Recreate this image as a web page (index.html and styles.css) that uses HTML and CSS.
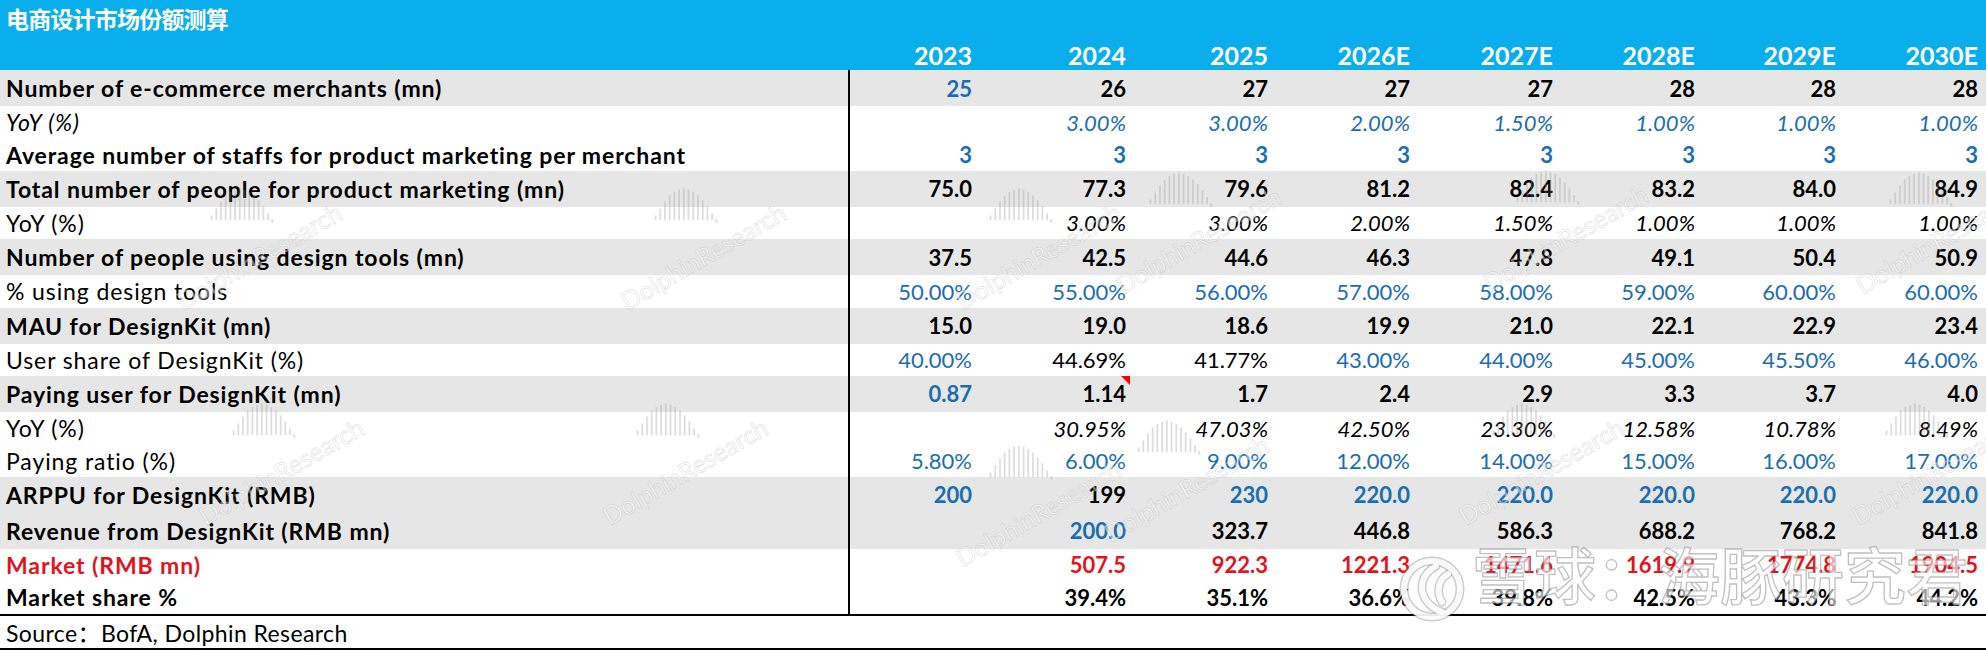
FILE: index.html
```html
<!DOCTYPE html>
<html lang="zh-CN">
<head>
<meta charset="utf-8">
<title>电商设计市场份额测算</title>
<link rel="stylesheet" href="styles.css">
</head>
<body>
<div class="sheet">
  <div class="header">
    <div class="title">电商设计市场份额测算</div>
    <div class="row years">
      <div class="hl"></div>
      <div class="c">2023</div><div class="c">2024</div><div class="c">2025</div><div class="c">2026E</div>
      <div class="c">2027E</div><div class="c">2028E</div><div class="c">2029E</div><div class="c">2030E</div>
    </div>
  </div>

  <div class="body">
    <div class="row g b">
      <div class="lbl">Number of e-commerce merchants (mn)</div>
      <div class="c blue">25</div><div class="c">26</div><div class="c">27</div><div class="c">27</div>
      <div class="c">27</div><div class="c">28</div><div class="c">28</div><div class="c">28</div>
    </div>
    <div class="row w i blue">
      <div class="lbl blk">YoY (%)</div>
      <div class="c"></div><div class="c">3.00%</div><div class="c">3.00%</div><div class="c">2.00%</div>
      <div class="c">1.50%</div><div class="c">1.00%</div><div class="c">1.00%</div><div class="c">1.00%</div>
    </div>
    <div class="row w b blue">
      <div class="lbl blk">Average number of staffs for product marketing per merchant</div>
      <div class="c">3</div><div class="c">3</div><div class="c">3</div><div class="c">3</div>
      <div class="c">3</div><div class="c">3</div><div class="c">3</div><div class="c">3</div>
    </div>
    <div class="row g b">
      <div class="lbl">Total number of people for product marketing (mn)</div>
      <div class="c">75.0</div><div class="c">77.3</div><div class="c">79.6</div><div class="c">81.2</div>
      <div class="c">82.4</div><div class="c">83.2</div><div class="c">84.0</div><div class="c">84.9</div>
    </div>
    <div class="row w">
      <div class="lbl">YoY (%)</div>
      <div class="c i"></div><div class="c i">3.00%</div><div class="c i">3.00%</div><div class="c i">2.00%</div>
      <div class="c i">1.50%</div><div class="c i">1.00%</div><div class="c i">1.00%</div><div class="c i">1.00%</div>
    </div>
    <div class="row g b">
      <div class="lbl">Number of people using design tools (mn)</div>
      <div class="c">37.5</div><div class="c">42.5</div><div class="c">44.6</div><div class="c">46.3</div>
      <div class="c">47.8</div><div class="c">49.1</div><div class="c">50.4</div><div class="c">50.9</div>
    </div>
    <div class="row w blue">
      <div class="lbl blk">% using design tools</div>
      <div class="c">50.00%</div><div class="c">55.00%</div><div class="c">56.00%</div><div class="c">57.00%</div>
      <div class="c">58.00%</div><div class="c">59.00%</div><div class="c">60.00%</div><div class="c">60.00%</div>
    </div>
    <div class="row g b">
      <div class="lbl">MAU for DesignKit (mn)</div>
      <div class="c">15.0</div><div class="c">19.0</div><div class="c">18.6</div><div class="c">19.9</div>
      <div class="c">21.0</div><div class="c">22.1</div><div class="c">22.9</div><div class="c">23.4</div>
    </div>
    <div class="row w blue">
      <div class="lbl blk">User share of DesignKit (%)</div>
      <div class="c">40.00%</div><div class="c blk">44.69%</div><div class="c blk">41.77%</div><div class="c">43.00%</div>
      <div class="c">44.00%</div><div class="c">45.00%</div><div class="c">45.50%</div><div class="c">46.00%</div>
    </div>
    <div class="row g b">
      <div class="lbl">Paying user for DesignKit (mn)</div>
      <div class="c blue">0.87</div><div class="c note">1.14</div><div class="c">1.7</div><div class="c">2.4</div>
      <div class="c">2.9</div><div class="c">3.3</div><div class="c">3.7</div><div class="c">4.0</div>
    </div>
    <div class="row w">
      <div class="lbl">YoY (%)</div>
      <div class="c i"></div><div class="c i">30.95%</div><div class="c i">47.03%</div><div class="c i">42.50%</div>
      <div class="c i">23.30%</div><div class="c i">12.58%</div><div class="c i">10.78%</div><div class="c i">8.49%</div>
    </div>
    <div class="row w blue">
      <div class="lbl blk">Paying ratio (%)</div>
      <div class="c">5.80%</div><div class="c">6.00%</div><div class="c">9.00%</div><div class="c">12.00%</div>
      <div class="c">14.00%</div><div class="c">15.00%</div><div class="c">16.00%</div><div class="c">17.00%</div>
    </div>
    <div class="row g b blue">
      <div class="lbl blk">ARPPU for DesignKit (RMB)</div>
      <div class="c">200</div><div class="c blk">199</div><div class="c">230</div><div class="c">220.0</div>
      <div class="c">220.0</div><div class="c">220.0</div><div class="c">220.0</div><div class="c">220.0</div>
    </div>
    <div class="row g b">
      <div class="lbl">Revenue from DesignKit (RMB mn)</div>
      <div class="c"></div><div class="c blue">200.0</div><div class="c">323.7</div><div class="c">446.8</div>
      <div class="c">586.3</div><div class="c">688.2</div><div class="c">768.2</div><div class="c">841.8</div>
    </div>
    <div class="row w b red">
      <div class="lbl">Market (RMB mn)</div>
      <div class="c"></div><div class="c">507.5</div><div class="c">922.3</div><div class="c">1221.3</div>
      <div class="c">1471.6</div><div class="c">1619.9</div><div class="c">1774.8</div><div class="c">1904.5</div>
    </div>
    <div class="row w b">
      <div class="lbl">Market share %</div>
      <div class="c"></div><div class="c">39.4%</div><div class="c">35.1%</div><div class="c">36.6%</div>
      <div class="c">39.8%</div><div class="c">42.5%</div><div class="c">43.3%</div><div class="c">44.2%</div>
    </div>
  </div>

  <div class="source">Source：BofA, Dolphin Research</div>

  <div class="wm-layer">
    <div class="wm a1"><svg class="bars" viewBox="0 0 56 34"><path d="M3 26v4M7 20v10M11 14v16M15 9v21M19 6v24M23 4v26M27 3v27M31 4v26M35 6v24M39 9v21M43 13v17M47 18v12M51 24v6M54 29l1 3"/></svg><span class="wmt">DolphinResearch</span></div>
    <div class="wm a2"><svg class="bars" viewBox="0 0 56 34"><path d="M3 26v4M7 20v10M11 14v16M15 9v21M19 6v24M23 4v26M27 3v27M31 4v26M35 6v24M39 9v21M43 13v17M47 18v12M51 24v6M54 29l1 3"/></svg><span class="wmt">DolphinResearch</span></div>
    <div class="wm a3"><svg class="bars" viewBox="0 0 56 34"><path d="M3 26v4M7 20v10M11 14v16M15 9v21M19 6v24M23 4v26M27 3v27M31 4v26M35 6v24M39 9v21M43 13v17M47 18v12M51 24v6M54 29l1 3"/></svg><span class="wmt">DolphinResearch</span></div>
    <div class="wm a4"><svg class="bars" viewBox="0 0 56 34"><path d="M3 26v4M7 20v10M11 14v16M15 9v21M19 6v24M23 4v26M27 3v27M31 4v26M35 6v24M39 9v21M43 13v17M47 18v12M51 24v6M54 29l1 3"/></svg><span class="wmt">DolphinResearch</span></div>
    <div class="wm a5"><svg class="bars" viewBox="0 0 56 34"><path d="M3 26v4M7 20v10M11 14v16M15 9v21M19 6v24M23 4v26M27 3v27M31 4v26M35 6v24M39 9v21M43 13v17M47 18v12M51 24v6M54 29l1 3"/></svg><span class="wmt">DolphinResearch</span></div>
    <div class="wm a6"><svg class="bars" viewBox="0 0 56 34"><path d="M3 26v4M7 20v10M11 14v16M15 9v21M19 6v24M23 4v26M27 3v27M31 4v26M35 6v24M39 9v21M43 13v17M47 18v12M51 24v6M54 29l1 3"/></svg><span class="wmt">DolphinResearch</span></div>
    <div class="wm b1"><svg class="bars" viewBox="0 0 56 34"><path d="M3 26v4M7 20v10M11 14v16M15 9v21M19 6v24M23 4v26M27 3v27M31 4v26M35 6v24M39 9v21M43 13v17M47 18v12M51 24v6M54 29l1 3"/></svg><span class="wmt">DolphinResearch</span></div>
    <div class="wm b2"><svg class="bars" viewBox="0 0 56 34"><path d="M3 26v4M7 20v10M11 14v16M15 9v21M19 6v24M23 4v26M27 3v27M31 4v26M35 6v24M39 9v21M43 13v17M47 18v12M51 24v6M54 29l1 3"/></svg><span class="wmt">DolphinResearch</span></div>
    <div class="wm b3"><svg class="bars" viewBox="0 0 56 34"><path d="M3 26v4M7 20v10M11 14v16M15 9v21M19 6v24M23 4v26M27 3v27M31 4v26M35 6v24M39 9v21M43 13v17M47 18v12M51 24v6M54 29l1 3"/></svg><span class="wmt">DolphinResearch</span></div>
    <div class="wm b4"><svg class="bars" viewBox="0 0 56 34"><path d="M3 26v4M7 20v10M11 14v16M15 9v21M19 6v24M23 4v26M27 3v27M31 4v26M35 6v24M39 9v21M43 13v17M47 18v12M51 24v6M54 29l1 3"/></svg><span class="wmt">DolphinResearch</span></div>
    <div class="wm b5"><svg class="bars" viewBox="0 0 56 34"><path d="M3 26v4M7 20v10M11 14v16M15 9v21M19 6v24M23 4v26M27 3v27M31 4v26M35 6v24M39 9v21M43 13v17M47 18v12M51 24v6M54 29l1 3"/></svg><span class="wmt">DolphinResearch</span></div>
    <div class="wm b6"><svg class="bars" viewBox="0 0 56 34"><path d="M3 26v4M7 20v10M11 14v16M15 9v21M19 6v24M23 4v26M27 3v27M31 4v26M35 6v24M39 9v21M43 13v17M47 18v12M51 24v6M54 29l1 3"/></svg><span class="wmt">DolphinResearch</span></div>

    <div class="xq">
      <svg class="xq-logo" viewBox="0 0 76 70">
        <circle cx="38" cy="35" r="28" class="ring-bg"/>
        <path d="M42 12 C28 20 24 34 32 46 C36 52 42 56 48 58" class="swirl-bg"/>
        <path d="M54 20 C44 26 42 38 48 48" class="swirl-bg"/>
        <circle cx="38" cy="35" r="28" class="ring"/>
        <path d="M42 12 C28 20 24 34 32 46 C36 52 42 56 48 58" class="swirl"/>
        <path d="M54 20 C44 26 42 38 48 48" class="swirl"/>
      </svg>
      <span class="xq-text">雪球：海豚研究君</span>
    </div>
  </div>
</div>
</body>
</html>
```

FILE: styles.css
```css
html, body {
  margin: 0;
  padding: 0;
  background: #ffffff;
}

body {
  font-family: Lato, "Noto Sans CJK SC", sans-serif;
  font-size: 22px;
  color: #000000;
}

.sheet {
  position: relative;
  width: 1986px;
  height: 650px;
  overflow: hidden;
}

.header {
  height: 70px;
  background: #0aaeec;
  display: flex;
  flex-direction: column;
  justify-content: space-between;
}

.title {
  font-family: "Noto Sans CJK SC", sans-serif;
  font-weight: 700;
  font-size: 23px;
  line-height: 26px;
  color: #ffffff;
  padding: 5px 0 0 6px;
  letter-spacing: -0.8px;
}

.row {
  display: grid;
  grid-template-columns: 850px 126px 154px 142px 142px 143px 142px 141px 142px;
  align-items: stretch;
}

.years {
  height: 30px;
  color: #ffffff;
  font-weight: 700;
  font-size: 25px;
}

.c {
  display: flex;
  align-items: center;
  justify-content: flex-end;
  padding-right: 4px;
  white-space: nowrap;
}

.lbl {
  display: flex;
  align-items: center;
  padding-left: 6px;
  white-space: nowrap;
  border-right: 2px solid #000000;
  font-size: 23px;
  letter-spacing: 0.9px;
}

.body {
  border-bottom: 2px solid #000000;
}

.g {
  height: 36px;
  background: #e6e6e6;
}

.w {
  height: 32.4px;
  background: #ffffff;
}

.b { font-weight: 700; }
.i { font-style: italic; }
.blue { color: #1b6db3; }
.red { color: #e1141d; }
.blk { color: #000000; }

.note {
  position: relative;
}

.note::after {
  content: "";
  position: absolute;
  top: 0;
  right: 0;
  width: 0;
  height: 0;
  border-top: 9px solid #ff0000;
  border-left: 9px solid transparent;
}

.source {
  height: 32px;
  display: flex;
  align-items: center;
  padding-left: 6px;
  border-bottom: 2px solid #000000;
  font-size: 23px;
  letter-spacing: 0.4px;
}

/* watermark overlay */
.wm-layer {
  position: absolute;
  left: 0;
  top: 0;
  width: 1986px;
  height: 650px;
  pointer-events: none;
}

.wm {
  position: absolute;
  width: 220px;
  display: flex;
  flex-direction: column;
  align-items: center;
}

.bars {
  width: 66px;
  height: 44px;
}

.bars path {
  stroke: rgba(150, 150, 150, 0.32);
  stroke-width: 1.5;
  fill: none;
}

.wmt {
  margin-top: 14px;
  margin-left: 36px;
  font-family: Lato, sans-serif;
  font-size: 25px;
  color: rgba(255, 255, 255, 0.45);
  -webkit-text-stroke: 0.7px rgba(150, 150, 150, 0.3);
  transform: rotate(-30deg);
  white-space: nowrap;
}

.a1 { left: 131px; top: 183px; }
.a2 { left: 575px; top: 183px; }
.a3 { left: 910px; top: 183px; }
.a4 { left: 1070px; top: 167px; }
.a5 { left: 1437px; top: 165px; }
.a6 { left: 1810px; top: 167px; }
.b1 { left: 153px; top: 398px; }
.b2 { left: 557px; top: 398px; }
.b3 { left: 910px; top: 440px; }
.b4 { left: 1058px; top: 415px; }
.b5 { left: 1413px; top: 398px; }
.b6 { left: 1806px; top: 398px; }

.xq {
  position: absolute;
  left: 1394px;
  top: 554px;
  display: flex;
  align-items: center;
  gap: 2px;
}

.xq-logo {
  width: 76px;
  height: 70px;
}

.xq-logo .ring-bg,
.xq-logo .swirl-bg {
  fill: none;
  stroke: rgba(130, 130, 130, 0.4);
  stroke-width: 9;
  stroke-linecap: round;
}

.xq-logo .ring,
.xq-logo .swirl {
  fill: none;
  stroke: rgba(255, 255, 255, 0.9);
  stroke-width: 6;
  stroke-linecap: round;
}

.xq-text {
  font-family: "Noto Sans CJK SC", sans-serif;
  font-size: 62px;
  line-height: 70px;
  font-weight: 500;
  color: rgba(255, 255, 255, 0.62);
  -webkit-text-stroke: 1.3px rgba(130, 130, 130, 0.5);
  white-space: nowrap;
  position: relative;
  top: -16px;
}
```
